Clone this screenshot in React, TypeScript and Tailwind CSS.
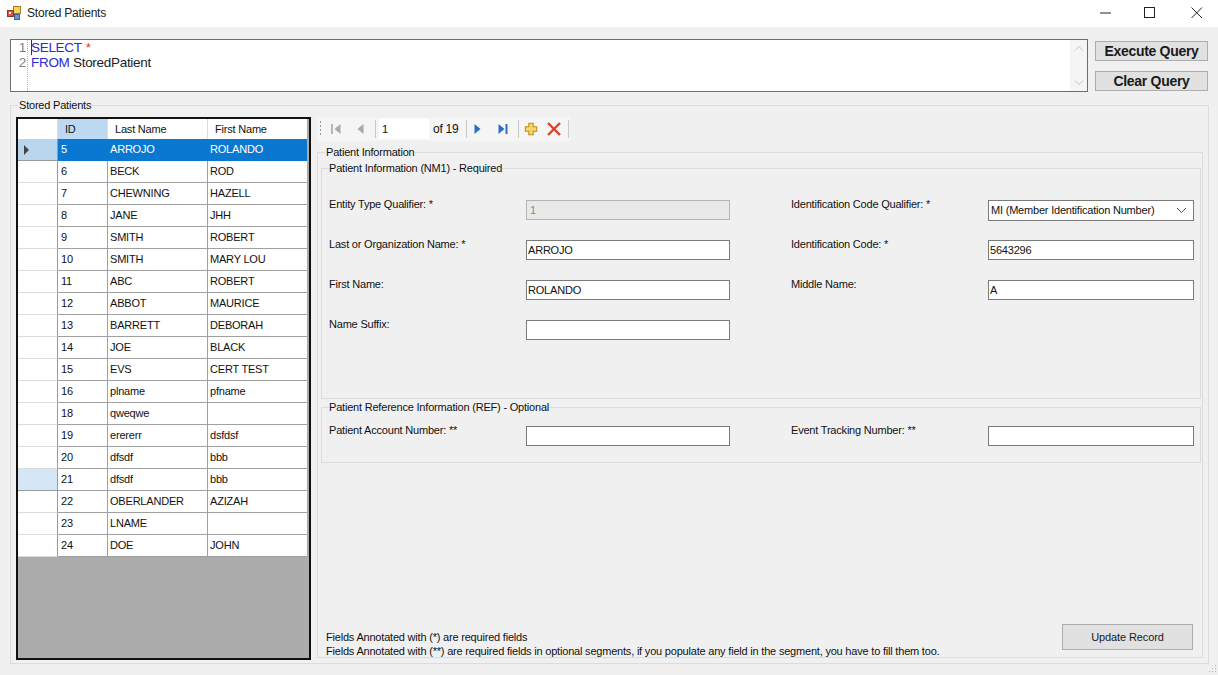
import React from "react";

const rows: [string, string, string][] = [
  ["5", "ARROJO", "ROLANDO"],
  ["6", "BECK", "ROD"],
  ["7", "CHEWNING", "HAZELL"],
  ["8", "JANE", "JHH"],
  ["9", "SMITH", "ROBERT"],
  ["10", "SMITH", "MARY LOU"],
  ["11", "ABC", "ROBERT"],
  ["12", "ABBOT", "MAURICE"],
  ["13", "BARRETT", "DEBORAH"],
  ["14", "JOE", "BLACK"],
  ["15", "EVS", "CERT TEST"],
  ["16", "plname", "pfname"],
  ["18", "qweqwe", ""],
  ["19", "erererr", "dsfdsf"],
  ["20", "dfsdf", "bbb"],
  ["21", "dfsdf", "bbb"],
  ["22", "OBERLANDER", "AZIZAH"],
  ["23", "LNAME", ""],
  ["24", "DOE", "JOHN"],
];

function AppIcon() {
  return (
    <svg width="16" height="16" viewBox="0 0 16 16" className="shrink-0">
      <rect x="7.5" y="1.5" width="7" height="7" fill="#f5d35a" stroke="#a87f1e" />
      <rect x="1.5" y="5.5" width="6" height="6" fill="#e4553f" stroke="#8c3322" />
      <rect x="8.5" y="9.5" width="5" height="5" fill="#6f95d8" stroke="#3f5f9a" />
      <rect x="3" y="7" width="2" height="2" fill="#fff" />
    </svg>
  );
}

function NavIcon({ kind, color, bar }: { kind: "l" | "r"; color: string; bar: string }) {
  return (
    <svg width="16" height="16" viewBox="0 0 16 16">
      {kind === "l" ? (
        <path d="M11.5 3v10L5.5 8z" fill={color} />
      ) : (
        <path d="M4.5 3v10l6-5z" fill={color} />
      )}
      {bar && kind === "l" && <rect x="2" y="3" width="2" height="10" fill={bar} />}
      {bar && kind === "r" && <rect x="11.5" y="3" width="2" height="10" fill={bar} />}
    </svg>
  );
}

function Sep() {
  return <div className="w-px h-[18px] bg-[#c8c8c8] mx-[3px]" />;
}

function Group({
  title,
  className,
  legend,
  children,
}: {
  title: string;
  className: string;
  legend: string;
  children: React.ReactNode;
}) {
  return (
    <fieldset className={`border border-[#dcdcdc] min-w-0 ${className}`}>
      <legend className={`h-[14px] leading-[14px] ${legend}`}>{title}</legend>
      {children}
    </fieldset>
  );
}

function Input({ value = "", disabled = false }: { value?: string; disabled?: boolean }) {
  return (
    <div
      className={`h-[20px] leading-[19px] border ${
        disabled ? "bg-[#e9e9e9] border-[#b4b4b4] text-[#8a8a8a] pl-[3px]" : "bg-white border-[#7a7a7a] pl-[1px]"
      }`}
    >
      {value}
    </div>
  );
}

function Field({
  label,
  children,
  inputWidth,
}: {
  label: string;
  children: React.ReactNode;
  inputWidth: string;
}) {
  return (
    <div className="flex items-start h-[20px]">
      <div className="shrink-0 w-[197px] leading-[14px] mt-[-3px]">{label}</div>
      <div className={inputWidth}>{children}</div>
    </div>
  );
}

function F2({
  a,
  b,
}: {
  a: [string, React.ReactNode];
  b?: [string, React.ReactNode];
}) {
  return (
    <div className="flex">
      <Field label={a[0]} inputWidth="w-[204px]">
        {a[1]}
      </Field>
      {b && (
        <div className="ml-[61px]">
          <Field label={b[0]} inputWidth="w-[206px]">
            {b[1]}
          </Field>
        </div>
      )}
    </div>
  );
}

export default function App() {
  return (
    <div
      className="w-[1218px] h-[675px] overflow-hidden bg-[#f0f0f0] text-[11px] tracking-[-0.2px] text-[#111] flex flex-col relative"
      style={{ fontFamily: '"Liberation Sans", Arial, sans-serif' }}
    >
      {/* Title bar */}
      <div className="h-[27px] bg-white flex items-center shrink-0 pl-[6px] pb-[2px]">
        <AppIcon />
        <span className="ml-[5px] text-[12px] tracking-[-0.2px] text-[#222]">Stored Patients</span>
        <div className="ml-auto flex items-center">
          <svg width="46" height="24" viewBox="0 0 46 24">
            <path d="M20 12h11" stroke="#222" strokeWidth="1" />
          </svg>
          <svg width="46" height="24" viewBox="0 0 46 24">
            <rect x="18.5" y="6.5" width="10" height="10" fill="none" stroke="#222" />
          </svg>
          <svg width="46" height="24" viewBox="0 0 46 24">
            <path d="M19.5 6.5l10.5 10.5M30 6.5L19.5 17" stroke="#222" />
          </svg>
        </div>
      </div>

      {/* Query row */}
      <div className="flex pl-[10px] pt-[12px] shrink-0">
        <div className="w-[1078px] h-[53px] bg-white border border-[#6e6e6e] flex text-[13.5px] tracking-[-0.3px] leading-[15px]">
          <div className="w-[17px] text-right text-[#808080] pr-[1px] border-r border-dotted border-[#b0b0b0] shrink-0">
            <div>1</div>
            <div>2</div>
          </div>
          <div className="pl-[3px] flex-1">
            <div className="flex">
              <div className="w-px h-[15px] bg-[#333] -mr-px" />
              <span className="text-[#2b2bd0]">SELECT</span>
              <span className="text-[#d33] ml-[4px]">*</span>
            </div>
            <div>
              <span className="text-[#2b2bd0]">FROM</span> <span className="text-[#222]">StoredPatient</span>
            </div>
          </div>
          <div className="w-[17px] bg-[#f5f5f5] flex flex-col justify-between items-center py-[5px] shrink-0">
            <svg width="10" height="7" viewBox="0 0 10 7">
              <path d="M1 5.5l4-4 4 4" fill="none" stroke="#c4c4c4" />
            </svg>
            <svg width="10" height="7" viewBox="0 0 10 7">
              <path d="M1 1.5l4 4 4-4" fill="none" stroke="#c4c4c4" />
            </svg>
          </div>
        </div>
        <div className="ml-[7px] pt-[2px] flex flex-col gap-[10px]">
          <button className="w-[113px] h-[20px] bg-[#e1e1e1] border border-[#adadad] text-[14px] tracking-[-0.3px] font-bold leading-[17px] text-[#1a1a1a]">
            Execute Query
          </button>
          <button className="w-[113px] h-[20px] bg-[#e1e1e1] border border-[#adadad] text-[14px] tracking-[-0.3px] font-bold leading-[17px] text-[#1a1a1a]">
            Clear Query
          </button>
        </div>
      </div>

      {/* Stored patients group */}
      <div className="pl-[10px] pt-[6px]">
        <Group title="Stored Patients" legend="ml-[2px] pl-px" className="w-[1199px] h-[566px] pl-[5px]">
          <div className="flex pt-[5px]">
            {/* Grid */}
            <div className="w-[295px] h-[543px] border-2 border-[#111] bg-[#ababab] shrink-0">
              <div className="flex h-[20px] bg-white leading-[20px] w-[289px]">
                <div className="w-[40px] border-r border-[#dcdcdc]" />
                <div className="w-[50px] bg-[#bcd9f1] pl-[7px] border-r border-[#dcdcdc]">ID</div>
                <div className="w-[100px] pl-[7px] border-r border-[#dcdcdc]">Last Name</div>
                <div className="w-[99px] pl-[7px]">First Name</div>
              </div>
              {rows.map((r, i) => {
                const sel = i === 0;
                return (
                  <div key={r[0]} className="flex h-[22px] w-[289px] leading-[21px]">
                    <div
                      className={`w-[40px] border-r border-b flex items-center pl-[5px] ${
                        sel
                          ? "bg-[#b8d7ef] border-[#9a9a9a]"
                          : i === 15
                          ? "bg-[#d5e7f6] border-[#9a9a9a]"
                          : "bg-white border-r-[#9a9a9a] border-b-[#dcdcdc]"
                      }`}
                    >
                      {sel && (
                        <svg width="7" height="10" viewBox="0 0 7 10">
                          <path d="M1 0l5 5-5 5z" fill="#444" />
                        </svg>
                      )}
                    </div>
                    {[r[0], r[1], r[2]].map((c, j) => (
                      <div
                        key={j}
                        className={`${j === 0 ? "w-[50px] pl-[3px]" : j === 1 ? "w-[100px] pl-[2px]" : "w-[99px] pl-[2px]"} truncate border-b ${
                          j < 2 ? "border-r" : ""
                        } ${sel ? "bg-[#0a78d0] text-white border-[#0a78d0]" : "bg-white border-[#a0a0a0]"}`}
                      >
                        {c}
                      </div>
                    ))}
                  </div>
                );
              })}
            </div>

            {/* Right side */}
            <div className="ml-[6px] w-[888px] flex flex-col">
              <div className="h-[24px] w-[253px] bg-[#f5f5f5] flex items-center pl-[2px] shrink-0">
                <svg width="4" height="18" viewBox="0 0 4 18" className="mr-[6px]">
                  <path d="M1 2h1M1 6h1M1 10h1M1 14h1" stroke="#999" strokeWidth="2" />
                </svg>
                <NavIcon kind="l" color="#a9a9a9" bar="#b5b5b5" />
                <div className="w-[7px]" />
                <NavIcon kind="l" color="#a9a9a9" bar="" />
                <div className="w-[4px]" />
                <Sep />
                <div className="w-[50px] h-[20px] bg-white pl-[3px] leading-[20px]">1</div>
                <span className="ml-[4px] w-[27px] text-[12px] tracking-[-0.25px] whitespace-nowrap">of 19</span>
                <div className="w-[3px]" />
                <Sep />
                <NavIcon kind="r" color="#2a6fc0" bar="" />
                <div className="w-[8px]" />
                <NavIcon kind="r" color="#2a6fc0" bar="#2a6fc0" />
                <div className="w-[5px]" />
                <Sep />
                <div className="w-[2px]" />
                <svg width="14" height="14" viewBox="0 0 16 16">
                  <path d="M5.5 1.5h5v4h4v5h-4v4h-5v-4h-4v-5h4z" fill="#f5d86a" stroke="#c48a10" strokeWidth="1.2" />
                </svg>
                <div className="w-[8px]" />
                <svg width="16" height="16" viewBox="0 0 16 16">
                  <path d="M2 2l12 12M14 2L2 14" stroke="#e0402a" strokeWidth="2.4" />
                </svg>
                <div className="w-[6px]" />
                <div className="w-px h-[18px] bg-[#c8c8c8]" />
              </div>

              <Group
                title="Patient Information"
                legend="ml-[4px] pl-px"
                className="mt-[4px] w-[886px] h-[513px] pl-[3px] pr-[3px]"
              >
                <Group
                  title="Patient Information (NM1) - Required"
                  legend=""
                  className="mt-[2px] h-[238px] w-[880px] pl-[7px]"
                >
                  <div className="pt-[25px] flex flex-col gap-[20px]">
                    <F2
                      a={["Entity Type Qualifier: *", <Input value="1" disabled />]}
                      b={[
                        "Identification Code Qualifier: *",
                        <div className="h-[21px] bg-white border border-[#7a7a7a] pl-[2px] flex items-center justify-between pr-[6px] whitespace-nowrap">
                          <span>MI (Member Identification Number)</span>
                          <svg width="11" height="7" viewBox="0 0 11 7">
                            <path d="M1 1l4.5 4.5L10 1" fill="none" stroke="#555" />
                          </svg>
                        </div>,
                      ]}
                    />
                    <F2
                      a={["Last or Organization Name: *", <Input value="ARROJO" />]}
                      b={["Identification Code: *", <Input value="5643296" />]}
                    />
                    <F2
                      a={["First Name:", <Input value="ROLANDO" />]}
                      b={["Middle Name:", <Input value="A" />]}
                    />
                    <F2 a={["Name Suffix:", <Input />]} />
                  </div>
                </Group>
                <Group
                  title="Patient Reference Information (REF) - Optional"
                  legend=""
                  className="mt-[1px] h-[63px] w-[880px] pl-[7px]"
                >
                  <div className="pt-[12px]">
                    <F2
                      a={["Patient Account Number: **", <Input />]}
                      b={["Event Tracking Number: **", <Input />]}
                    />
                  </div>
                </Group>
                <div className="mt-[161px] flex items-start pl-[5px]">
                  <div className="leading-[14px] pt-[6px]">
                    <div>Fields Annotated with (*) are required fields</div>
                    <div>
                      Fields Annotated with (**) are required fields in optional segments, if you populate any field in the segment, you have to fill them too.
                    </div>
                  </div>
                  <button className="ml-auto mr-[6px] w-[131px] h-[26px] bg-[#e1e1e1] border border-[#adadad] tracking-[-0.1px] text-[#1a1a1a]">
                    Update Record
                  </button>
                </div>
              </Group>
            </div>
          </div>
        </Group>
      </div>
      <svg width="10" height="10" viewBox="0 0 10 10" className="absolute right-[1px] bottom-[1px]">
        <path d="M8 1h1v1H8zM5 4h1v1H5zM8 4h1v1H8zM2 7h1v1H2zM5 7h1v1H5zM8 7h1v1H8z" fill="#b5b5b5" />
      </svg>
    </div>
  );
}
